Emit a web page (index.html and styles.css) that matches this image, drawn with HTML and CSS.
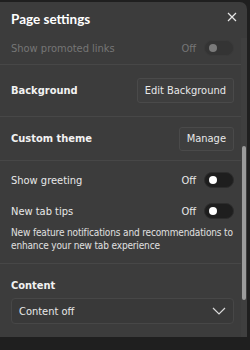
FILE: index.html
```html
<!DOCTYPE html>
<html lang="en">
<head>
    <meta charset="UTF-8">
    <meta name="viewport" content="width=device-width, initial-scale=1.0">
    <title>Page settings</title>
    <link rel="stylesheet" href="styles.css">
</head>
<body>
    <div class="panel">
        <div class="header">
            <h1>Page settings</h1>
            <button class="close" aria-label="Close">
                <svg width="10" height="10" viewBox="0 0 10 10"><path d="M1 1L9 9M9 1L1 9" stroke="#e6e6e6" stroke-width="1.2"/></svg>
            </button>
        </div>

        <div class="row dim">
            <span class="label">Show promoted links</span>
            <span class="state">Off</span>
            <span class="toggle"></span>
        </div>

        <div class="section bg-section">
            <span class="title">Background</span>
            <button class="btn">Edit Background</button>
        </div>

        <div class="section theme-section">
            <span class="title">Custom theme</span>
            <button class="btn">Manage</button>
        </div>

        <div class="section toggles">
            <div class="row">
                <span class="label">Show greeting</span>
                <span class="state">Off</span>
                <span class="toggle"></span>
            </div>
            <div class="row">
                <span class="label">New tab tips</span>
                <span class="state">Off</span>
                <span class="toggle"></span>
            </div>
            <p class="desc">New feature notifications and recommendations to enhance your new tab experience</p>
        </div>

        <div class="section content-section">
            <span class="title">Content</span>
            <div class="select">
                <span>Content off</span>
                <svg width="14" height="8" viewBox="0 0 14 8"><path d="M1 1L7 7L13 1" fill="none" stroke="#d8d8d8" stroke-width="1.2"/></svg>
            </div>
        </div>

        <div class="scrollbar"><div class="thumb"></div></div>
    </div>
</body>
</html>
```

FILE: styles.css
```css
body {
    margin: 0;
    background-color: #1f1f1f;
    font-family: "DejaVu Sans Condensed", "DejaVu Sans", sans-serif;
    color: #e8e8e8;
}
.panel {
    position: relative;
    margin-top: 2px;
    width: 247px;
    height: 335px;
    background-color: #3c3c3c;
    border-radius: 0 7px 0 0;
    box-sizing: border-box;
    padding: 0 13px 0 11px;
    overflow: hidden;
}
.header {
    display: flex;
    align-items: center;
    justify-content: space-between;
    height: 34px;
}
h1 {
    margin: 0;
    font-family: Lato, sans-serif;
    font-size: 13.5px;
    font-weight: 700;
    color: #ffffff;
}
.close {
    background: none;
    border: none;
    padding: 0;
    margin: -4px -3px 0 0;
    display: flex;
}
.row {
    display: flex;
    align-items: center;
    height: 20px;
    font-size: 11px;
}
.row .label {
    flex: 1;
}
.state {
    margin-right: 8px;
}
.toggle {
    position: relative;
    width: 30px;
    height: 16px;
    border-radius: 8px;
    background-color: #1e1e1e;
    border: 1px solid #2c2c2c;
    box-sizing: border-box;
}
.toggle::after {
    content: "";
    position: absolute;
    left: 4px;
    top: 3px;
    width: 8px;
    height: 8px;
    border-radius: 50%;
    background-color: #ffffff;
}
.dim {
    margin-top: 2px;
    padding-bottom: 5px;
    color: #767676;
}
.dim .toggle {
    background-color: #343434;
    border-color: #3a3a3a;
}
.dim .toggle::after {
    background-color: #7a7a7a;
}
.section {
    border-top: 1px solid #474747;
    margin-right: -13px;
    padding-right: 13px;
    margin-left: -11px;
    padding-left: 11px;
}
.bg-section,
.theme-section {
    display: flex;
    align-items: center;
    justify-content: space-between;
}
.bg-section {
    height: 51px;
    margin-top: 1px;
}
.theme-section {
    height: 43px;
}
.title {
    font-size: 11px;
    font-weight: 700;
    color: #f2f2f2;
}
.btn {
    font-family: inherit;
    font-size: 11px;
    color: #e8e8e8;
    background-color: #3e3e3e;
    border: 1px solid #4a4a4a;
    border-radius: 3px;
    padding: 0 7px;
    height: 25px;
}
.theme-section .btn {
    height: 24px;
}
.toggles {
    padding-top: 9px;
    padding-bottom: 11px;
}
.toggles .row + .row {
    margin-top: 11px;
}
.desc {
    margin: 5px 0 0;
    font-size: 10px;
    line-height: 13px;
    letter-spacing: -0.15px;
    color: #e0e0e0;
}
.content-section {
    padding-top: 14px;
}
.content-section .title {
    display: block;
    line-height: 16px;
}
.select {
    margin-top: 4px;
    height: 26px;
    box-sizing: border-box;
    border: 1px solid #474747;
    border-radius: 4px;
    background-color: #393939;
    display: flex;
    align-items: center;
    justify-content: space-between;
    padding: 0 7px 0 7px;
    font-size: 11px;
}
.scrollbar {
    position: absolute;
    right: 0;
    top: 36px;
    bottom: 0;
    width: 6px;
    background-color: #3f3f3f;
}
.thumb {
    position: absolute;
    left: 1px;
    top: 108px;
    width: 4px;
    height: 154px;
    border-radius: 2px;
    background-color: #9b9b9b;
}
```
